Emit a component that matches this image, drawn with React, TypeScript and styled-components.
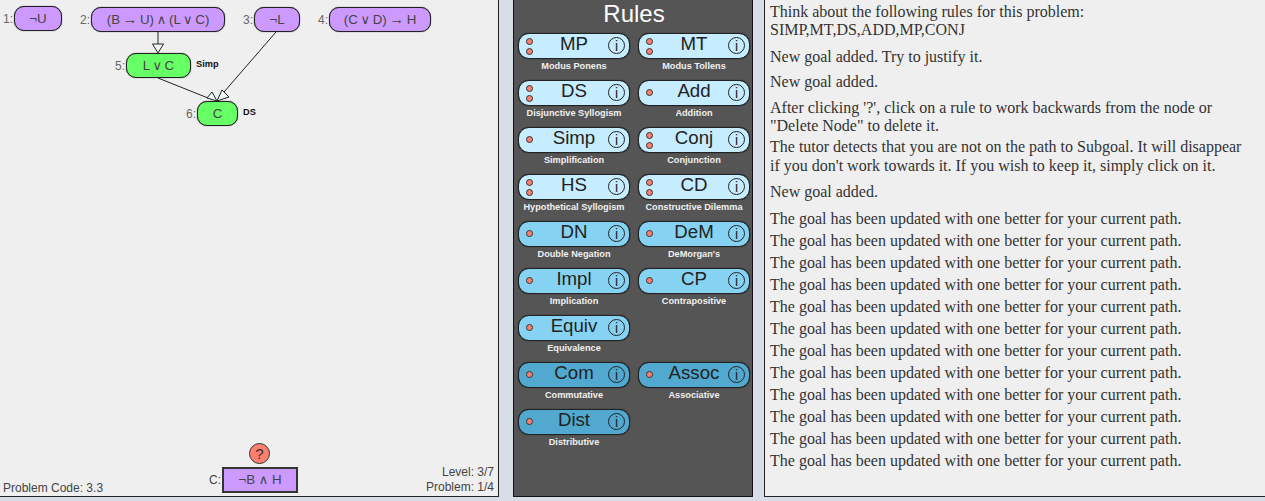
import React from "react";
import styled, { createGlobalStyle } from "styled-components";

const Global = createGlobalStyle`
  html, body { margin: 0; padding: 0; height: 100%; overflow: hidden; background: #d8dde8; }
  #root { height: 100%; }
`;

const Page = styled.div`
  display: flex;
  width: 1265px;
  height: 497px;
  font-family: "Liberation Sans", Arial, sans-serif;
  > * { box-sizing: border-box; flex: none; }
`;

const Canvas = styled.div`
  position: relative;
  width: 499px;
  height: 497px;
  background: #efefef;
  border-right: 1px solid #222;
  border-bottom: 1px solid #222;
  color: #333;
`;

const Node = styled.div<{ $x: number; $y: number }>`
  position: absolute;
  left: ${(p) => p.$x}px;
  top: ${(p) => p.$y}px;
  display: flex;
  align-items: center;
  font-size: 12px;
  color: #666;
`;

const Pill = styled.div<{ $w: number; $given?: boolean }>`
  box-sizing: border-box;
  width: ${(p) => p.$w}px;
  height: 25px;
  margin-left: 1px;
  border: 1px solid #222;
  border-radius: 10px;
  background: ${(p) => (p.$given ? "#cc99ff" : "#66ff66")};
  color: #444;
  font-size: 13.33px;
  word-spacing: -1px;
  white-space: pre;
  display: flex;
  align-items: center;
  justify-content: center;
  box-shadow: 0 0 1px #222;
`;

const Formula = styled.span`
  line-height: 16px;
`;

const Op = styled.span<{ $arrow?: boolean }>`
  font-family: ${(p) => (p.$arrow ? '"Liberation Sans"' : '"DejaVu Sans"')}, sans-serif;
  font-size: ${(p) => (p.$arrow ? 14.5 : 13)}px;
  line-height: 1;
`;

const Justification = styled.span`
  position: absolute;
  left: 100%;
  margin-left: 5px;
  top: 6px;
  font-size: 9.2px;
  font-weight: bold;
  color: #111;
`;

const Arrows = styled.svg`
  position: absolute;
  left: 0;
  top: 0;
  pointer-events: none;
`;

const Footer = styled.div`
  position: absolute;
  left: 3px;
  right: 4px;
  bottom: 1px;
  display: flex;
  justify-content: space-between;
  align-items: flex-end;
  font-size: 12px;
  color: #444;
  line-height: 15px;
`;

const CodeText = styled.div`
  margin-bottom: -1px;
`;

const Progress = styled.div`
  text-align: right;
`;

const Goal = styled.div`
  position: absolute;
  left: 209px;
  top: 443px;
  display: flex;
  flex-direction: column;
  align-items: center;
`;

const Help = styled.div`
  box-sizing: border-box;
  width: 21px;
  height: 21px;
  margin-left: 12px;
  border-radius: 50%;
  border: 1px solid #333;
  background: #ff7f6e;
  color: #333;
  font-size: 15px;
  display: flex;
  align-items: center;
  justify-content: center;
`;

const GoalRow = styled.div`
  display: flex;
  align-items: center;
  margin-top: 3px;
  font-size: 12px;
  color: #444;
`;

const GoalBox = styled.div`
  box-sizing: border-box;
  width: 76px;
  height: 26px;
  margin-left: 1px;
  border: 2px solid #333;
  background: #cc99ff;
  font-size: 13.33px;
  color: #444;
  white-space: pre;
  display: flex;
  align-items: center;
  justify-content: center;
`;

const RulesPanel = styled.div`
  width: 240px;
  height: 497px;
  margin: 0 11px 0 14px;
  background: #555555;
  border: 1px solid #111;
  border-top: none;
  padding: 0 2px 0 4px;
`;

const RulesTitle = styled.div`
  height: 33px;
  line-height: 28px;
  text-align: center;
  font-size: 24px;
  color: #fff;
`;

const RulesGrid = styled.div`
  display: grid;
  grid-template-columns: 112px 112px;
  column-gap: 8px;
  grid-auto-rows: 47px;
`;

const RuleCell = styled.div`
  display: flex;
  flex-direction: column;
  align-items: center;
`;

const RuleButton = styled.div<{ $tone: string }>`
  box-sizing: border-box;
  position: relative;
  width: 112px;
  height: 26px;
  border: 1px solid #222;
  border-radius: 11px;
  background: ${(p) => p.$tone};
  box-shadow: 0 0 1px #111;
  display: flex;
  align-items: center;
  justify-content: center;
  padding-bottom: 4px;
  font-size: 18.67px;
  color: #222;
`;

const Dots = styled.div<{ $count: number }>`
  position: absolute;
  left: 7px;
  top: 0;
  bottom: ${(p) => (p.$count === 1 ? 2 : 0)}px;
  display: flex;
  flex-direction: column;
  justify-content: center;
  gap: 3px;
`;

const Dot = styled.span`
  display: block;
  width: 7px;
  height: 7px;
  border-radius: 50%;
  background: #ff7f6e;
  border: 1px solid #333;
  box-sizing: border-box;
`;

const Info = styled.span`
  position: absolute;
  right: 4px;
  top: 3px;
  box-sizing: border-box;
  width: 17px;
  height: 17px;
  border: 1.5px solid #222;
  border-radius: 50%;
  font-size: 14px;
  display: flex;
  align-items: center;
  justify-content: center;
`;

const RuleName = styled.div`
  margin-top: 1px;
  font-size: 9.2px;
  font-weight: bold;
  line-height: 12px;
  color: #f0f0f0;
  white-space: nowrap;
`;

const Log = styled.div`
  width: 501px;
  height: 497px;
  background: #efefef;
  border-left: 1px solid #222;
  border-bottom: 1px solid #222;
  padding: 3px 15px 0 5px;
  font-family: "Liberation Serif", "Times New Roman", serif;
  font-size: 16px;
  line-height: 18.4px;
  color: #333;
  overflow: hidden;
`;

const Entry = styled.p<{ $gap?: number }>`
  margin: 0 0 ${(p) => p.$gap ?? 3.6}px;
`;

type Rule = { short: string; name: string; dots: number; tone: string };

const LIGHT = "#c6ecff";
const MID = "#86d2f2";
const DARK = "#52a9cf";

const rules: (Rule | null)[] = [
  { short: "MP", name: "Modus Ponens", dots: 2, tone: LIGHT },
  { short: "MT", name: "Modus Tollens", dots: 2, tone: LIGHT },
  { short: "DS", name: "Disjunctive Syllogism", dots: 2, tone: LIGHT },
  { short: "Add", name: "Addition", dots: 1, tone: LIGHT },
  { short: "Simp", name: "Simplification", dots: 1, tone: LIGHT },
  { short: "Conj", name: "Conjunction", dots: 2, tone: LIGHT },
  { short: "HS", name: "Hypothetical Syllogism", dots: 2, tone: LIGHT },
  { short: "CD", name: "Constructive Dilemma", dots: 2, tone: LIGHT },
  { short: "DN", name: "Double Negation", dots: 1, tone: MID },
  { short: "DeM", name: "DeMorgan's", dots: 1, tone: MID },
  { short: "Impl", name: "Implication", dots: 1, tone: MID },
  { short: "CP", name: "Contrapositive", dots: 1, tone: MID },
  { short: "Equiv", name: "Equivalence", dots: 1, tone: MID },
  null,
  { short: "Com", name: "Commutative", dots: 1, tone: DARK },
  { short: "Assoc", name: "Associative", dots: 1, tone: DARK },
  { short: "Dist", name: "Distributive", dots: 1, tone: DARK },
];

const nodes = [
  { n: 1, x: 3, y: 6, w: 48, text: "¬U", given: true },
  { n: 2, x: 80, y: 7, w: 134, text: "(B → U) ∧ (L ∨ C)", given: true },
  { n: 3, x: 243, y: 7, w: 46, text: "¬L", given: true },
  { n: 4, x: 318, y: 7, w: 102, text: "(C ∨ D) → H", given: true },
  { n: 5, x: 115, y: 53, w: 65, text: "L ∨ C", just: "Simp" },
  { n: 6, x: 186, y: 101, w: 41, text: "C", just: "DS" },
];

// the logic symbols come out too small in Liberation Sans
function FormulaText({ text }: { text: string }) {
  return (
    <Formula>
      {text.split(/([→∧∨])/).map((part, i) =>
        /[→∧∨]/.test(part) ? (
          <Op key={i} $arrow={part === "→"}>
            {part}
          </Op>
        ) : (
          part
        )
      )}
    </Formula>
  );
}

export default function App() {
  return (
    <Page>
      <Global />
      <Canvas>
        <Arrows width="498" height="140">
          <g stroke="#222" strokeWidth="1" fill="#eef8fb">
            <line x1="158" y1="31" x2="158" y2="44" />
            <path d="M152.5 44h11L158 53z" />
            <line x1="158" y1="78" x2="208" y2="98" />
            <path d="M207 98l5-6 5 9z" />
            <line x1="276" y1="32" x2="224" y2="92" />
            <path d="M217 101l5-11 7 7z" />
          </g>
        </Arrows>
        {nodes.map((node) => (
          <Node key={node.n} $x={node.x} $y={node.y}>
            {node.n}:
            <Pill $w={node.w} $given={node.given}>
              <FormulaText text={node.text} />
            </Pill>
            {node.just && <Justification>{node.just}</Justification>}
          </Node>
        ))}
        <Goal>
          <Help>?</Help>
          <GoalRow>
            C:
            <GoalBox>
              <FormulaText text="¬B ∧ H" />
            </GoalBox>
          </GoalRow>
        </Goal>
        <Footer>
          <CodeText>Problem Code: 3.3</CodeText>
          <Progress>
            Level: 3/7
            <br />
            Problem: 1/4
          </Progress>
        </Footer>
      </Canvas>
      <RulesPanel>
        <RulesTitle>Rules</RulesTitle>
        <RulesGrid>
          {rules.map((rule, i) =>
            rule ? (
              <RuleCell key={rule.short}>
                <RuleButton $tone={rule.tone}>
                  <Dots $count={rule.dots}>
                    {Array.from({ length: rule.dots }, (_, d) => (
                      <Dot key={d} />
                    ))}
                  </Dots>
                  {rule.short}
                  <Info>i</Info>
                </RuleButton>
                <RuleName>{rule.name}</RuleName>
              </RuleCell>
            ) : (
              <div key={i} />
            )
          )}
        </RulesGrid>
      </RulesPanel>
      <Log>
        <Entry $gap={8}>
          Think about the following rules for this problem:
          <br />
          SIMP,MT,DS,ADD,MP,CONJ
        </Entry>
        <Entry $gap={7}>New goal added. Try to justify it.</Entry>
        <Entry $gap={7}>New goal added.</Entry>
        <Entry $gap={3}>
          After clicking '?', click on a rule to work backwards from the node or
          "Delete Node" to delete it.
        </Entry>
        <Entry $gap={8}>
          The tutor detects that you are not on the path to Subgoal. It will
          disappear if you don't work towards it. If you wish to keep it, simply
          click on it.
        </Entry>
        <Entry $gap={8}>New goal added.</Entry>
        {Array.from({ length: 12 }, (_, i) => (
          <Entry key={i}>The goal has been updated with one better for your current path.</Entry>
        ))}
      </Log>
    </Page>
  );
}
